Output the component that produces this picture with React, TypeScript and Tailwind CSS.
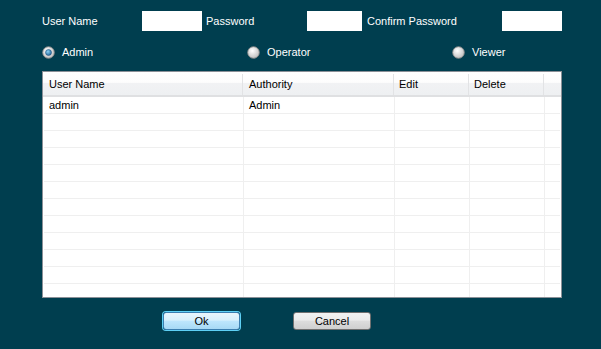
import React from "react";

const font = { fontFamily: '"Liberation Sans", Arial, sans-serif' };

function Radio({ checked }: { checked?: boolean }) {
	return (
		<svg width="13" height="13" viewBox="0 0 13 13" className="shrink-0">
			<defs>
				<radialGradient id={checked ? "rg1" : "rg0"} cx="0.4" cy="0.35" r="0.7">
					<stop offset="0" stopColor="#ffffff" />
					<stop offset="1" stopColor="#bcbcbc" />
				</radialGradient>
				<radialGradient id="dot" cx="0.4" cy="0.35" r="0.7">
					<stop offset="0" stopColor="#8fd3f6" />
					<stop offset="1" stopColor="#1a5f94" />
				</radialGradient>
			</defs>
			<circle cx="6.5" cy="6.5" r="5.8" fill={`url(#${checked ? "rg1" : "rg0"})`} stroke="#8a8a8a" strokeWidth="0.9" />
			{checked && <circle cx="6.5" cy="6.5" r="3" fill="url(#dot)" stroke="#1f4e7a" strokeWidth="0.5" />}
		</svg>
	);
}

const rows = [["admin", "Admin"], ...Array.from({ length: 11 }, () => ["", ""])];

export default function App() {
	return (
		<div className="w-[601px] h-[349px] bg-[#003e4f] text-[11px] relative overflow-hidden" style={font}>
			{/* fields */}
			<div className="flex items-center h-[20px] mt-[11px] pl-[42px] text-white">
				<span className="w-[100px]">User Name</span>
				<div className="w-[60px] h-[20px] bg-white" />
				<span className="w-[105px] pl-[4px]">Password</span>
				<div className="w-[55px] h-[20px] bg-white" />
				<span className="w-[140px] pl-[5px]">Confirm Password</span>
				<div className="w-[60px] h-[20px] bg-white" />
			</div>

			{/* roles */}
			<div className="flex items-center h-[14px] mt-[14px] pl-[42px] text-white">
				<div className="w-[205px] flex items-center gap-[7px]">
					<Radio checked />
					<span>Admin</span>
				</div>
				<div className="w-[205px] flex items-center gap-[7px]">
					<Radio />
					<span>Operator</span>
				</div>
				<div className="flex items-center gap-[7px]">
					<Radio />
					<span>Viewer</span>
				</div>
			</div>

			{/* table */}
			<div className="ml-[42px] mt-[12px] w-[520px] h-[227px] border border-[#8b9097] bg-white overflow-hidden text-black">
				<div className="flex h-[25px] pt-[2px] border-b-2 border-[#dfe0e2] bg-[linear-gradient(to_bottom,#ffffff_0%,#fdfdfd_45%,#f1f2f4_50%,#eef0f2_100%)]">
					<div className="w-[200px] pl-[6px] flex items-center border-r border-[#e2e3e5]">User Name</div>
					<div className="w-[151px] pl-[6px] flex items-center border-r border-[#e2e3e5]">Authority</div>
					<div className="w-[75px] pl-[5px] flex items-center border-r border-[#e2e3e5]">Edit</div>
					<div className="w-[75px] pl-[5px] flex items-center border-r border-[#e2e3e5]">Delete</div>
					<div className="flex-1" />
				</div>
				{rows.map((r, i) => (
					<div key={i} className="flex h-[17px] ml-[1px]">
						<div className="w-[200px] pl-[5px] pt-[1px] flex items-center border-r border-b border-[#efefef]">{r[0]}</div>
						<div className="w-[151px] pl-[5px] pt-[1px] flex items-center border-r border-b border-[#efefef]">{r[1]}</div>
						<div className="w-[75px] border-r border-b border-[#efefef]" />
						<div className="w-[75px] border-r border-b border-[#efefef]" />
						<div className="w-[15px] border-b border-[#efefef]" />
					</div>
				))}
			</div>

			{/* buttons */}
			<div className="flex pl-[163px] mt-[14px] gap-[53px] text-black">
				<button className="w-[77px] h-[18px] rounded-[3px] border border-[#3c7fb1] bg-[linear-gradient(to_bottom,#eaf6fd_0%,#d9f0fc_45%,#bee6fd_50%,#a7d9f5_100%)] shadow-[0_0_0_1px_#5ed0f5] flex items-center justify-center leading-none">
					Ok
				</button>
				<button className="w-[78px] h-[18px] rounded-[3px] border border-[#707070] bg-[linear-gradient(to_bottom,#f2f2f2_0%,#ebebeb_45%,#dddddd_50%,#cfcfcf_100%)] flex items-center justify-center leading-none">
					Cancel
				</button>
			</div>
		</div>
	);
}
